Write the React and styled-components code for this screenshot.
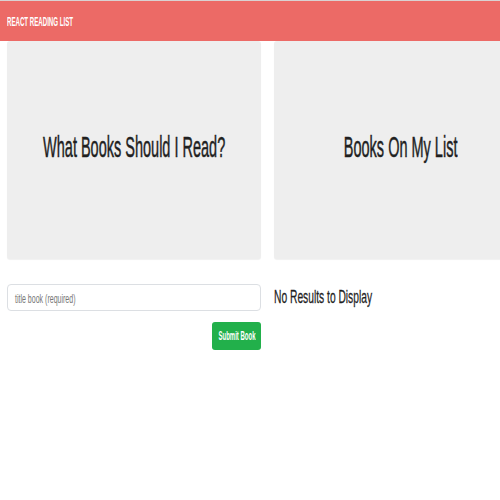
import { useState } from "react";
import styled, { createGlobalStyle } from "styled-components";

const Global = createGlobalStyle`
  html, body {
    margin: 0;
    padding: 0;
    background: #fff;
    overflow: hidden;
  }
  body {
    font-family: "Liberation Sans Narrow", "Liberation Sans", Arial, sans-serif;
    color: #222;
  }
`;

const Header = styled.header`
  height: 40px;
  border-top: 1px solid #d9d2d2;
  background: #ec6a66;
  display: flex;
  align-items: center;
  padding-left: 7px;
`;

const Squeeze = styled.span`
  display: inline-block;
  transform-origin: left center;
  transform: scaleX(${(p) => p.scale});
  white-space: nowrap;
`;

const Brand = styled.div`
  color: #fff;
  font-weight: bold;
  font-size: 12.5px;
  margin-top: 2px;
`;

const Row = styled.div`
  display: grid;
  grid-template-columns: 254px 254px;
  column-gap: 13px;
  padding-left: 7px;
`;

const Panel = styled.section`
  height: 218px;
  background: #eeeeee;
  border-radius: 3px;
  box-shadow: 0 1px 1px rgba(0, 0, 0, 0.06);
  display: flex;
  align-items: center;
  justify-content: center;
  padding-bottom: 6px;
  box-sizing: border-box;
`;

const Heading = styled.h1`
  margin: 0;
  font-size: 29px;
  font-weight: normal;
  color: #1f1f1f;
  display: flex;
  justify-content: center;
  width: 100%;
  -webkit-text-stroke: 0.5px #1f1f1f;
`;

const Centered = styled.span`
  display: inline-block;
  transform: scaleX(${(p) => p.scale});
  white-space: nowrap;
`;

const Form = styled.form`
  margin-top: 25px;
  display: flex;
  flex-direction: column;
  align-items: flex-end;
  gap: 11px;
`;

const Field = styled.label`
  position: relative;
  display: block;
  width: 100%;
  height: 27px;
`;

const Input = styled.input`
  box-sizing: border-box;
  width: 100%;
  height: 100%;
  border: 1px solid #dcdfe3;
  border-radius: 4px;
  padding: 0 7px;
  font-family: inherit;
  font-size: 13px;
  color: #555;
  outline: none;
`;

const Hint = styled.span`
  position: absolute;
  left: 8px;
  top: 50%;
  font-size: 13px;
  color: #777;
  pointer-events: none;
  transform-origin: left center;
  transform: translateY(-50%) scaleX(0.54);
  white-space: nowrap;
`;

const Button = styled.button`
  height: 28px;
  width: 49px;
  border: none;
  border-radius: 3px;
  background: #22b04b;
  color: #fff;
  font-family: inherit;
  font-weight: bold;
  font-size: 12px;
  padding: 0;
  display: flex;
  align-items: center;
  justify-content: center;
  overflow: visible;
`;

const Empty = styled.div`
  margin-top: 27px;
  font-size: 19px;
  color: #1f1f1f;
  -webkit-text-stroke: 0.3px #1f1f1f;
`;

export default function App() {
  const [title, setTitle] = useState("");
  return (
    <>
      <Global />
      <Header>
        <Brand>
          <Squeeze scale={0.49}>REACT READING LIST</Squeeze>
        </Brand>
      </Header>
      <Row>
        <Panel>
          <Heading>
            <Centered scale={0.5}>What Books Should I Read?</Centered>
          </Heading>
        </Panel>
        <Panel>
          <Heading>
            <Centered scale={0.5}>Books On My List</Centered>
          </Heading>
        </Panel>
        <Form onSubmit={(e) => e.preventDefault()}>
          <Field>
            <Input value={title} onChange={(e) => setTitle(e.target.value)} />
            {!title && <Hint>title book (required)</Hint>}
          </Field>
          <Button type="submit">
            <Centered scale={0.5}>Submit Book</Centered>
          </Button>
        </Form>
        <Empty>
          <Squeeze scale={0.54}>No Results to Display</Squeeze>
        </Empty>
      </Row>
    </>
  );
}
